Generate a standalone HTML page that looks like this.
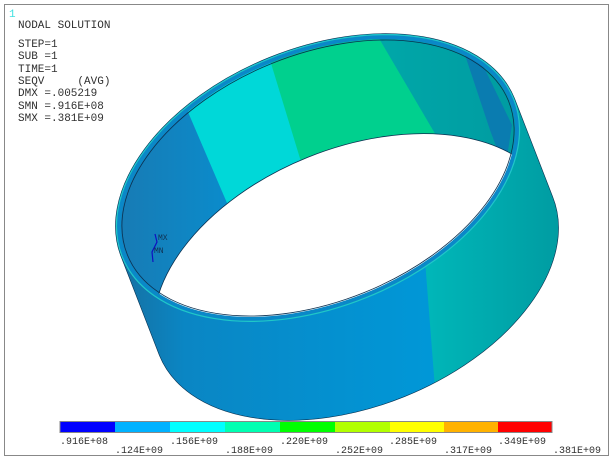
<!DOCTYPE html>
<html><head><meta charset="utf-8"><style>
html,body{margin:0;padding:0;background:#fff;}
body{width:614px;height:460px;overflow:hidden;position:relative;}
svg{position:absolute;left:0;top:0;}
text{font-family:"Liberation Mono",monospace;white-space:pre;}
</style></head><body>
<svg width="614" height="460" viewBox="0 0 614 460" xmlns="http://www.w3.org/2000/svg" xml:space="preserve">
<defs>
<clipPath id="top"><ellipse cx="318" cy="178" rx="210" ry="128" transform="rotate(-22 318 178)"/></clipPath>
<clipPath id="cyl"><path d="M121.4 257.4 A212 130 -22 0 1 514.6 98.6 L552.6 196.6 A212 130 -22 0 1 159.4 355.4 Z"/></clipPath>
<linearGradient id="fl" x1="0" x2="1" y1="0" y2="0"><stop offset="0" stop-color="#1a6a98"/><stop offset="0.25" stop-color="#0a86c4"/><stop offset="1" stop-color="#0098d8"/></linearGradient>
<linearGradient id="fr" x1="0" x2="1" y1="0" y2="0"><stop offset="0" stop-color="#00d8d8"/><stop offset="0.55" stop-color="#00c4c4"/><stop offset="1" stop-color="#009aa0"/></linearGradient>
<linearGradient id="il" x1="0" x2="1" y1="0" y2="0"><stop offset="0" stop-color="#1a78b0"/><stop offset="1" stop-color="#0a8ccc"/></linearGradient>
<linearGradient id="it" x1="0" x2="1" y1="0" y2="0"><stop offset="0" stop-color="#00bcb8"/><stop offset="1" stop-color="#00989e"/></linearGradient>
</defs>
<rect x="4.5" y="4.5" width="604" height="451" fill="#fff" stroke="#888" stroke-width="1"/>
<g clip-path="url(#cyl)">
<rect x="100" y="20" width="470" height="420" fill="url(#fr)"/>
<polygon points="100,20 410,20 425,260 439,440 100,440" fill="url(#fl)"/>
</g>
<path d="M121.4 257.4 A212 130 -22 0 1 514.6 98.6 L552.6 196.6 A212 130 -22 0 1 159.4 355.4 Z" fill="none" stroke="#0a3050" stroke-width="0.6"/>
<g clip-path="url(#top)">
<rect x="100" y="20" width="470" height="340" fill="url(#it)"/>
<polygon points="100,20 377,35 437,137 460,330 100,330" fill="#00d08e"/>
<polygon points="100,20 270,60 302,165 260,330 100,330" fill="#00d8d8"/>
<polygon points="100,20 188,112 230,210 200,330 100,330" fill="url(#il)"/>
<polygon points="460,40 478,55 512,125 505,170 490,130" fill="#0a7cb0"/>
<ellipse cx="356" cy="278" rx="212" ry="130" transform="rotate(-22 356 278)" fill="#fff" stroke="#0a3050" stroke-width="0.8"/>
</g>
<ellipse cx="318" cy="178" rx="209" ry="127" transform="rotate(-22 318 178)" fill="none" stroke="#0a88c8" stroke-width="5"/>
<ellipse cx="318" cy="178" rx="211" ry="129" transform="rotate(-22 318 178)" fill="none" stroke="#20c8c8" stroke-width="1.2"/>
<ellipse cx="318" cy="178" rx="205.5" ry="123.5" transform="rotate(-22 318 178)" fill="none" stroke="#0a3050" stroke-width="0.8"/>
<path d="M155 234 L157 242 L152 252 L153 262" stroke="#1010c0" stroke-width="1.2" fill="none"/>
<text x="158" y="240" font-size="8" fill="#103050">MX</text>
<text x="154" y="253" font-size="8" fill="#103050">MN</text>
<text x="9" y="17" font-size="11" fill="#40e0e0">1</text>
<g font-size="11" fill="#303030">
<text x="18" y="28">NODAL SOLUTION</text>
<text x="18" y="47">STEP=1</text>
<text x="18" y="59">SUB =1</text>
<text x="18" y="72">TIME=1</text>
<text x="18" y="84">SEQV     (AVG)</text>
<text x="18" y="96">DMX =.005219</text>
<text x="18" y="109">SMN =.916E+08</text>
<text x="18" y="121">SMX =.381E+09</text>
</g>
<g>
<rect x="60" y="422" width="55" height="10" fill="#0000ff"/>
<rect x="115" y="422" width="55" height="10" fill="#00b2ff"/>
<rect x="170" y="422" width="55" height="10" fill="#00ffff"/>
<rect x="225" y="422" width="55" height="10" fill="#00ffb2"/>
<rect x="280" y="422" width="55" height="10" fill="#00ff00"/>
<rect x="335" y="422" width="55" height="10" fill="#b2ff00"/>
<rect x="390" y="422" width="54" height="10" fill="#ffff00"/>
<rect x="444" y="422" width="54" height="10" fill="#ffb200"/>
<rect x="498" y="422" width="54" height="10" fill="#ff0000"/>
<rect x="60" y="421.5" width="492" height="11" fill="none" stroke="#888" stroke-width="1"/>
</g>
<g font-size="10" fill="#303030">
<text x="60" y="444">.916E+08</text>
<text x="170" y="444">.156E+09</text>
<text x="280" y="444">.220E+09</text>
<text x="389" y="444">.285E+09</text>
<text x="498" y="444">.349E+09</text>
<text x="115" y="453">.124E+09</text>
<text x="225" y="453">.188E+09</text>
<text x="335" y="453">.252E+09</text>
<text x="444" y="453">.317E+09</text>
<text x="553" y="453">.381E+09</text>
</g>
</svg>
</body></html>
